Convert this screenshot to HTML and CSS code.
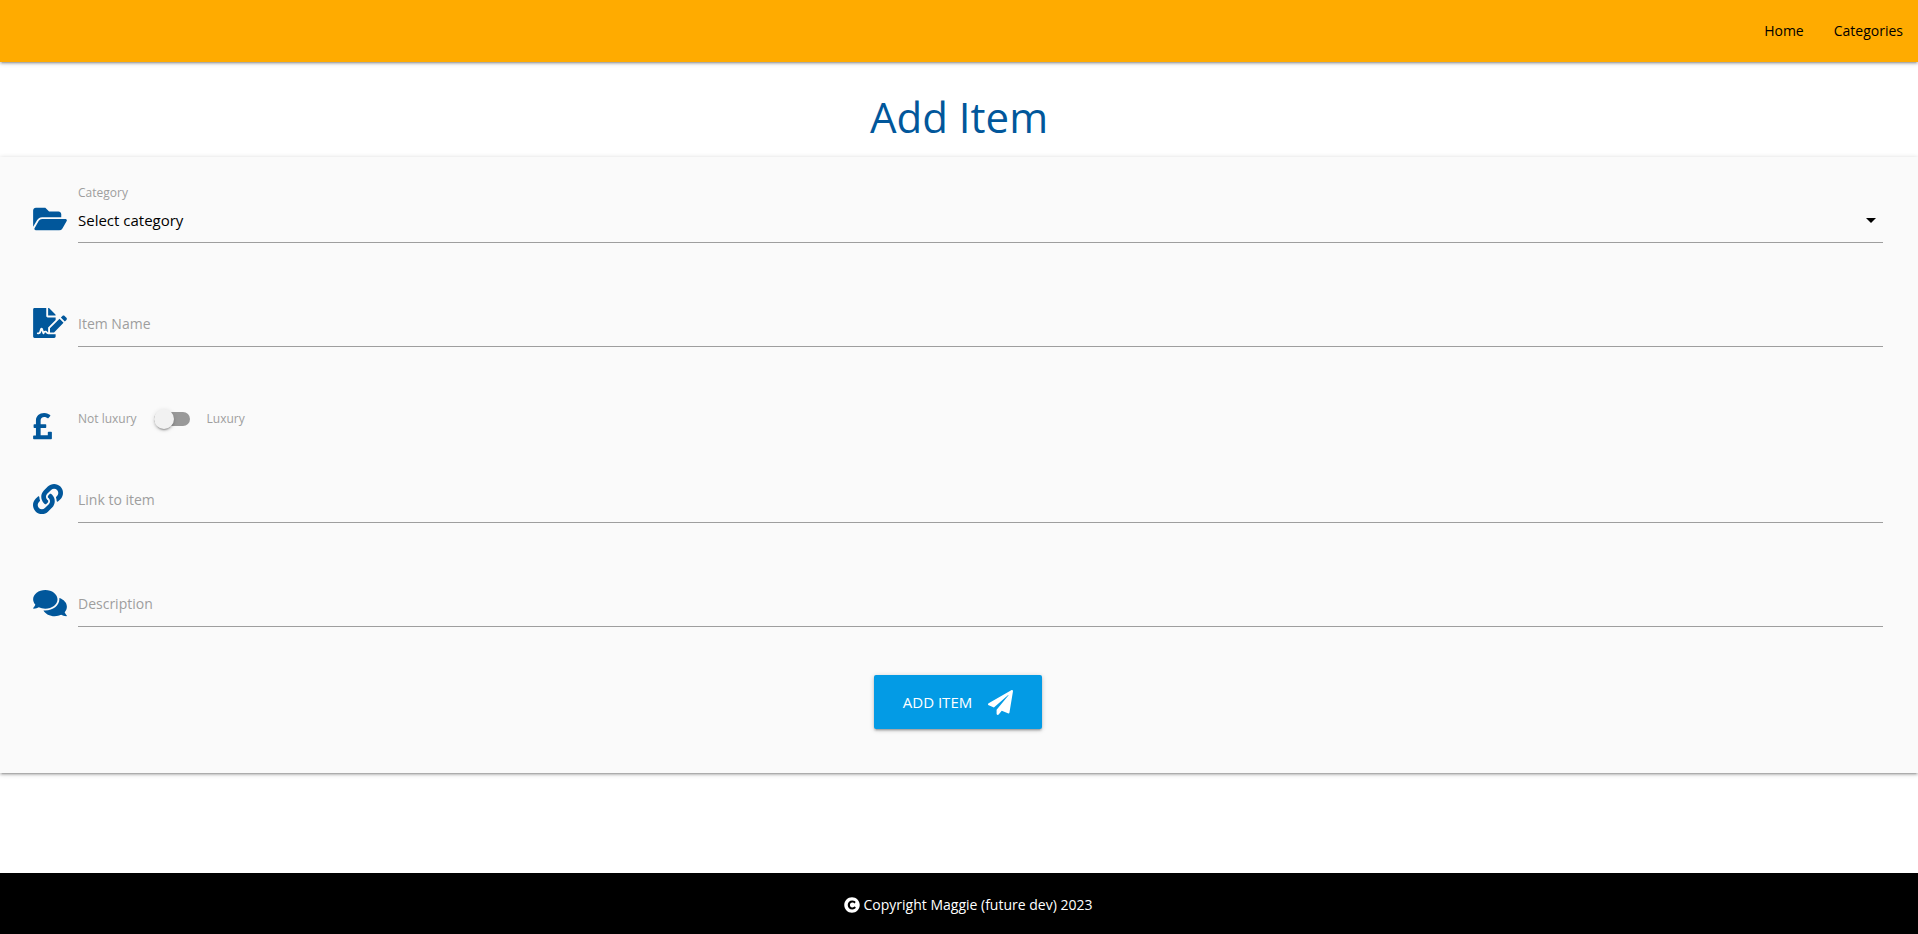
FILE: index.html
```html
<!DOCTYPE html>
<html lang="en">
<head>
<meta charset="utf-8">
<meta name="viewport" content="width=device-width, initial-scale=1">
<title>Add Item</title>
<link rel="stylesheet" href="styles.css">
</head>
<body>
<header>
  <nav class="navbar">
    <a class="nav-link" href="#home">Home</a>
    <a class="nav-link" href="#categories">Categories</a>
  </nav>
</header>
<main class="main">
  <h1 class="title">Add Item</h1>
  <form class="form-card">
    <div class="row">
      <svg class="icon" viewBox="0 0 576 512" aria-hidden="true"><path d="M572.694 292.093L500.27 416.248A63.997 63.997 0 0 1 444.989 448H45.025c-18.523 0-30.064-20.093-20.731-36.093l72.424-124.155A64 64 0 0 1 152 256h399.964c18.523 0 30.064 20.093 20.73 36.093zM152 224h328v-48c0-26.51-21.49-48-48-48H272l-64-64H48C21.49 64 0 85.49 0 112v278.046l69.077-118.418C86.214 242.25 117.989 224 152 224z"/></svg>
      <div class="select-field">
        <label class="small-label" for="category">Category</label>
        <div class="select-wrap">
          <select class="select" id="category"><option>Select category</option></select>
          <svg class="caret" viewBox="0 0 24 24" aria-hidden="true"><path d="M7 10l5 5 5-5z"/></svg>
        </div>
      </div>
    </div>
    <div class="row">
      <svg class="icon" viewBox="0 0 576 512" aria-hidden="true"><path d="M218.17 424.14c-2.95-5.92-8.09-6.52-10.17-6.52s-7.22.59-10.02 6.19l-7.67 15.34c-6.37 12.78-25.03 11.37-29.48-2.09L144 386.59l-10.61 31.88c-5.89 17.66-22.38 29.53-41 29.53H80c-8.84 0-16-7.16-16-16s7.16-16 16-16h12.39c4.83 0 9.11-3.08 10.64-7.66l18.19-54.64c3.3-9.81 12.44-16.41 22.78-16.41s19.48 6.59 22.77 16.41l13.88 41.64c19.75-16.19 54.06-9.7 66 14.16 1.89 3.78 5.49 5.95 9.36 6.26v-82.12l128-127.09V160H248c-13.2 0-24-10.8-24-24V0H24C10.7 0 0 10.7 0 24v464c0 13.3 10.7 24 24 24h336c13.3 0 24-10.7 24-24v-40l-128-.11c-16.12-.31-30.58-9.28-37.83-23.75zM384 121.9c0-6.3-2.5-12.4-7-16.9L279.1 7c-4.5-4.5-10.6-7-17-7H256v128h128v-6.1zm-96 225.06V416h68.99l161.68-162.78-67.88-67.88L288 346.96zm280.54-179.63l-31.87-31.87c-9.94-9.94-26.07-9.94-36.01 0l-27.25 27.25 67.88 67.88 27.25-27.25c9.95-9.94 9.95-26.07 0-36.01z"/></svg>
      <div class="text-field">
        <input class="input" id="item-name" type="text">
        <label class="input-label" for="item-name">Item Name</label>
      </div>
    </div>
    <div class="row row-switch">
      <svg class="icon icon-narrow" viewBox="0 0 320 512" aria-hidden="true"><path d="M308 352h-45.495c-6.627 0-12 5.373-12 12v50.848H128V288h84c6.627 0 12-5.373 12-12v-40c0-6.627-5.373-12-12-12h-84v-63.556c0-32.266 24.562-57.086 61.792-57.086 23.658 0 45.878 11.505 57.652 18.849 5.151 3.213 11.888 2.051 15.688-2.685l28.493-35.513c4.233-5.276 3.279-13.005-2.119-17.081C273.124 54.56 236.576 32 187.931 32 106.026 32 48 84.742 48 157.961V224H20c-6.627 0-12 5.373-12 12v40c0 6.627 5.373 12 12 12h28v128H12c-6.627 0-12 5.373-12 12v40c0 6.627 5.373 12 12 12h296c6.627 0 12-5.373 12-12V364c0-6.627-5.373-12-12-12z"/></svg>
      <label class="switch" for="luxury">
        <span>Not luxury</span>
        <input class="toggle" id="luxury" type="checkbox" role="switch">
        <span>Luxury</span>
      </label>
    </div>
    <div class="row">
      <svg class="icon icon-square" viewBox="0 0 512 512" aria-hidden="true"><path d="M326.612 185.391c59.747 59.809 58.927 155.698.36 214.59-.11.12-.24.25-.36.37l-67.2 67.2c-59.27 59.27-155.699 59.262-214.96 0-59.27-59.26-59.27-155.7 0-214.96l37.106-37.106c9.84-9.84 26.786-3.3 27.294 10.606.648 17.722 3.826 35.527 9.69 52.721 1.986 5.822.567 12.262-3.783 16.612l-13.087 13.087c-28.026 28.026-28.905 73.66-1.155 101.96 28.024 28.579 74.086 28.749 102.325.51l67.2-67.19c28.191-28.191 28.073-73.757 0-101.83-3.701-3.694-7.429-6.564-10.341-8.569a16.037 16.037 0 0 1-6.947-12.606c-.396-10.567 3.348-21.456 11.698-29.806l21.054-21.055c5.521-5.521 14.182-6.199 20.584-1.731a152.482 152.482 0 0 1 20.522 17.197zM467.547 44.449c-59.261-59.262-155.69-59.27-214.96 0l-67.2 67.2c-.12.12-.25.25-.36.37-58.566 58.892-59.387 154.781.36 214.59a152.454 152.454 0 0 0 20.521 17.196c6.402 4.468 15.064 3.789 20.584-1.731l21.054-21.055c8.35-8.35 12.094-19.239 11.698-29.806a16.037 16.037 0 0 0-6.947-12.606c-2.912-2.005-6.64-4.875-10.341-8.569-28.073-28.073-28.191-73.639 0-101.83l67.2-67.19c28.239-28.239 74.3-28.069 102.325.51 27.75 28.3 26.872 73.934-1.155 101.96l-13.087 13.087c-4.35 4.35-5.769 10.79-3.783 16.612 5.864 17.194 9.042 34.999 9.69 52.721.509 13.906 17.454 20.446 27.294 10.606l37.106-37.106c59.271-59.259 59.271-155.699.001-214.959z"/></svg>
      <div class="text-field">
        <input class="input" id="item-link" type="text">
        <label class="input-label" for="item-link">Link to item</label>
      </div>
    </div>
    <div class="row">
      <svg class="icon" viewBox="0 0 576 512" aria-hidden="true"><path d="M416 192c0-88.4-93.1-160-208-160S0 103.6 0 192c0 34.3 14.1 65.9 38 92-13.4 30.2-35.5 54.2-35.8 54.5-2.2 2.3-2.8 5.7-1.5 8.7S4.8 352 8 352c36.6 0 66.9-12.3 88.7-25 32.2 15.7 70.3 25 111.3 25 114.9 0 208-71.6 208-160zm122 220c23.9-26 38-57.7 38-92 0-66.9-53.5-124.2-129.3-148.1.9 6.6 1.3 13.3 1.3 20.1 0 105.9-107.7 192-240 192-10.8 0-21.3-.8-31.7-1.9C207.8 439.6 281.8 480 368 480c41 0 79.1-9.2 111.3-25 21.8 12.7 52.1 25 88.7 25 3.2 0 6.1-1.9 7.3-4.8 1.3-2.9.7-6.3-1.5-8.7-.3-.3-22.4-24.2-35.8-54.5z"/></svg>
      <div class="text-field">
        <input class="input" id="description" type="text">
        <label class="input-label" for="description">Description</label>
      </div>
    </div>
    <button class="button" type="submit">ADD ITEM
      <svg class="button-icon" viewBox="0 0 512 512" aria-hidden="true"><path d="M476 3.2L12.5 270.6c-18.1 10.4-15.8 35.6 2.2 43.2L121 358.4l287.3-253.2c5.5-4.9 13.3 2.6 8.6 8.3L176 407v80.5c0 23.6 28.5 32.9 42.5 15.8L282 426l124.6 52.2c14.2 6 30.4-2.9 33-18.2l72-432C515 7.8 493.3-6.8 476 3.2z"/></svg>
    </button>
  </form>
</main>
<footer class="footer">
  <svg class="footer-icon" viewBox="0 0 512 512" aria-hidden="true"><path d="M256 8C119.033 8 8 119.033 8 256s111.033 248 248 248 248-111.033 248-248S392.967 8 256 8zm117.134 346.753c-1.592 1.867-39.776 45.731-109.851 45.731-84.692 0-144.484-63.26-144.484-145.567 0-81.303 62.004-143.401 143.762-143.401 66.957 0 101.965 37.315 103.422 38.904a12 12 0 0 1 1.238 14.623l-22.38 34.655c-4.049 6.267-12.774 7.351-18.234 2.295-.233-.214-26.529-23.88-61.88-23.88-46.116 0-73.916 33.575-73.916 76.082 0 39.602 25.514 79.692 74.277 79.692 38.697 0 65.28-28.338 65.544-28.625 5.132-5.565 14.059-5.033 18.508 1.053l24.547 33.572a12.001 12.001 0 0 1-.553 14.866z"/></svg>
  <span>Copyright Maggie (future dev) 2023</span>
</footer>
</body>
</html>
```
FILE: styles.css
```css
*, *::before, *::after {
  box-sizing: border-box;
}

:root {
  --blue: #01579b;
  --grey: #9e9e9e;
  --depth: 0 2px 2px 0 rgba(0, 0, 0, 0.14), 0 3px 1px -2px rgba(0, 0, 0, 0.12), 0 1px 5px 0 rgba(0, 0, 0, 0.2);
}

body {
  display: flex;
  flex-direction: column;
  min-height: 100vh;
  margin: 0;
  background: #fff;
  color: #000;
  font: 400 15px/24px "Segoe UI", "Open Sans", "Noto Sans", sans-serif;
}

.navbar {
  display: flex;
  justify-content: flex-end;
  background: #ffab00;
  box-shadow: var(--depth);
}

.nav-link {
  padding: 0 15px;
  color: #000;
  font-size: 14px;
  line-height: 62px;
  text-decoration: none;
}

.main {
  flex: 1;
}

.title {
  margin: 30px 0 16px;
  color: var(--blue);
  font-size: 42px;
  font-weight: 400;
  line-height: 49px;
  text-align: center;
}

.form-card {
  display: flex;
  flex-direction: column;
  gap: 58px;
  padding: 28px 35px 44px 33px;
  background: #fafafa;
  box-shadow: var(--depth);
}

.row {
  display: grid;
  grid-template-columns: 45px 1fr;
  align-items: end;
}

.icon {
  width: 34px;
  height: 30px;
  margin-bottom: 9px;
  fill: var(--blue);
}

.icon-square {
  width: 30px;
}

.icon-narrow {
  width: 19px;
}

.select-field {
  display: flex;
  flex-direction: column;
}

.small-label {
  color: var(--grey);
  font-size: 12px;
  line-height: 16px;
}

.select-wrap,
.text-field {
  display: grid;
  align-items: center;
  border-bottom: 1px solid var(--grey);
}

.select-wrap > *,
.text-field > * {
  grid-area: 1 / 1;
}

.select-wrap {
  padding-bottom: 3px;
}

.select {
  width: 100%;
  height: 38px;
  padding: 0;
  border: 0;
  background: none;
  color: #000;
  font: inherit;
  appearance: none;
}

.caret {
  justify-self: end;
  width: 24px;
  height: 24px;
  pointer-events: none;
}

.input {
  width: 100%;
  height: 45px;
  padding: 0;
  border: 0;
  outline: 0;
  background: none;
  font: inherit;
}

.input-label {
  color: var(--grey);
  font-size: 14px;
  pointer-events: none;
}

.input:focus + .input-label {
  visibility: hidden;
}

.row-switch {
  align-items: start;
  margin-bottom: -31px;
  padding-top: 6px;
}

.switch {
  display: flex;
  align-items: center;
  gap: 17px;
  color: var(--grey);
  font-size: 12px;
  line-height: 16px;
}

.toggle {
  display: flex;
  align-items: center;
  width: 36px;
  height: 14px;
  margin: 0;
  border-radius: 8px;
  background: #999;
  appearance: none;
}

.toggle::before {
  width: 20px;
  height: 20px;
  border-radius: 50%;
  background: #f1f1f1;
  box-shadow: 0 3px 1px -2px rgba(0, 0, 0, 0.2), 0 2px 2px 0 rgba(0, 0, 0, 0.14), 0 1px 5px 0 rgba(0, 0, 0, 0.12);
  content: "";
}

.toggle:checked {
  justify-content: flex-end;
}

.button {
  display: flex;
  align-items: center;
  align-self: center;
  gap: 16px;
  height: 54px;
  margin-top: -10px;
  padding: 0 29px;
  border: 0;
  border-radius: 2px;
  background: #039be5;
  box-shadow: var(--depth);
  color: #fff;
  font: inherit;
}

.button-icon {
  width: 25px;
  height: 25px;
  fill: currentColor;
}

.footer {
  display: flex;
  align-items: center;
  justify-content: center;
  gap: 4px;
  padding: 20px 0 17px 18px;
  background: #000;
  color: #fff;
  font-size: 14px;
}

.footer-icon {
  width: 16px;
  height: 16px;
  fill: currentColor;
}
```
